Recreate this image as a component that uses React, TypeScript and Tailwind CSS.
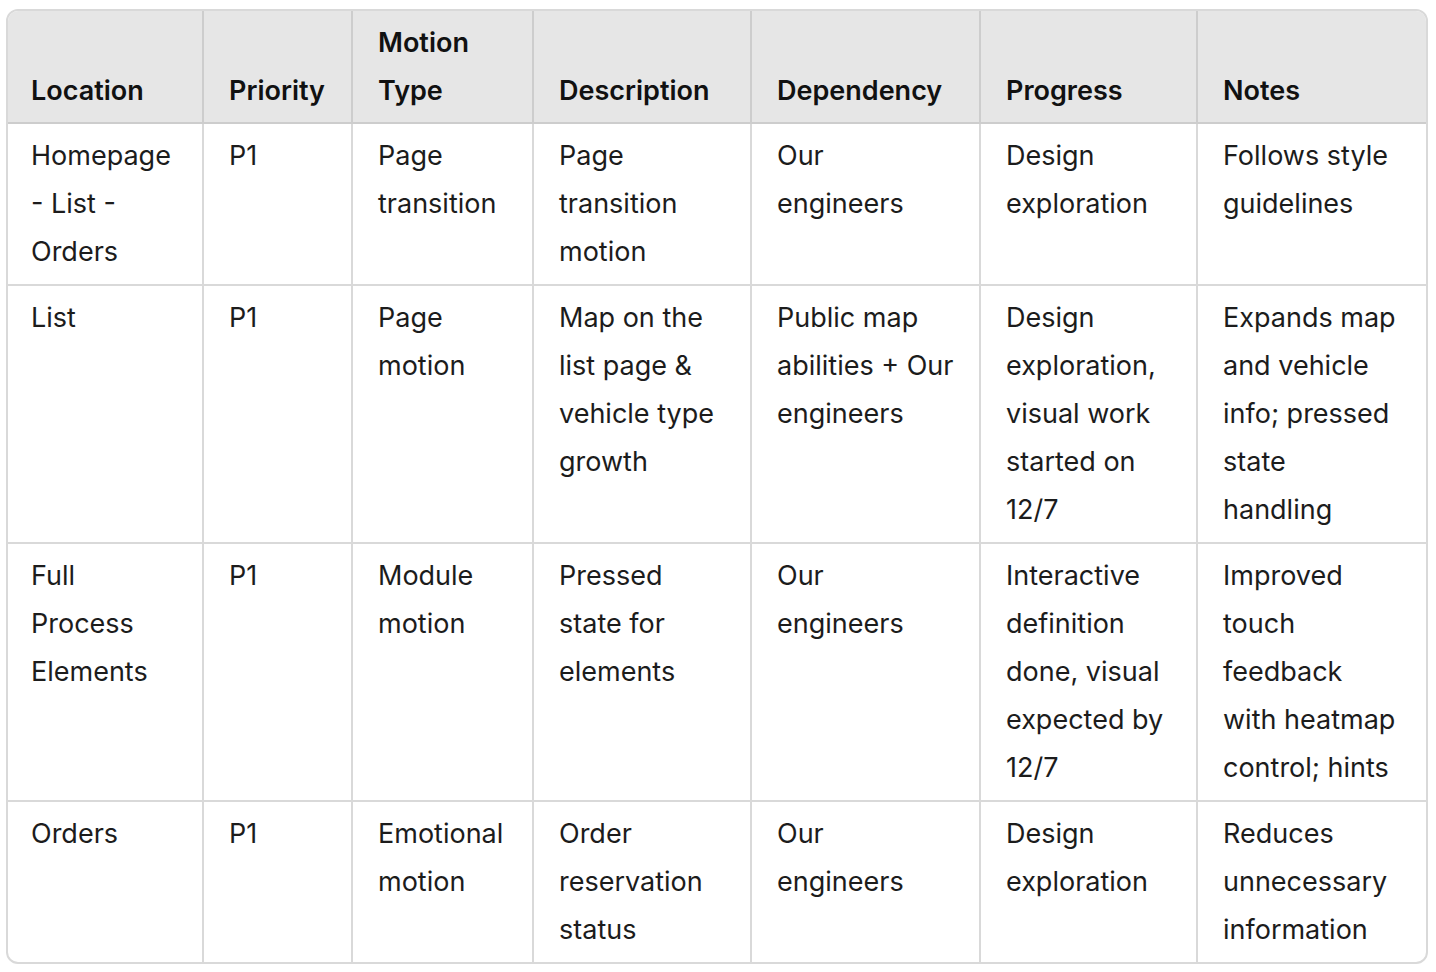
import React from "react";

const cols = [194, 149, 181, 218, 229, 217, 230];
const headers = ["Location", "Priority", "Motion Type", "Description", "Dependency", "Progress", "Notes"];
const rows: string[][] = [
  ["Homepage - List - Orders", "P1", "Page transition", "Page transition motion", "Our engineers", "Design exploration", "Follows style guidelines"],
  ["List", "P1", "Page motion", "Map on the list page & vehicle type growth", "Public map abilities + Our engineers", "Design exploration, visual work started on 12/7", "Expands map and vehicle info; pressed state handling"],
  ["Full Process Elements", "P1", "Module motion", "Pressed state for elements", "Our engineers", "Interactive definition done, visual expected by 12/7", "Improved touch feedback with heatmap control; hints"],
  ["Orders", "P1", "Emotional motion", "Order reservation status", "Our engineers", "Design exploration", "Reduces unnecessary information"],
];

const padCls = (i: number) =>
  i === 0 ? "pl-[23px] pr-[25px]" : i === 6 ? "pl-[25px] pr-[27px]" : "pl-[25px] pr-[25px]";

export default function App() {
  return (
    <div className="bg-white w-[1436px] h-[972px] pt-[9px] pl-[6px]" style={{ fontFamily: "Inter, 'Noto Sans', sans-serif" }}>
      <div className="w-[1422px] border-2 border-[#d9d9d9] rounded-[12px] overflow-hidden">
        <table className="table-fixed w-full border-separate border-spacing-0 text-[27px] leading-[48px]">
          <colgroup>
            {cols.map((w, i) => (
              <col key={i} style={{ width: w }} />
            ))}
          </colgroup>
          <thead>
            <tr className="bg-[#e6e6e6]">
              {headers.map((h, i) => (
                <th
                  key={i}
                  className={`text-left align-bottom font-semibold text-[#111111] ${padCls(i)} pt-[8px] pb-[7px] border-b-2 border-[#cdcdcd] ${i > 0 ? "border-l-2" : ""}`}
                >
                  {h}
                </th>
              ))}
            </tr>
          </thead>
          <tbody>
            {rows.map((r, ri) => (
              <tr key={ri}>
                {r.map((c, ci) => (
                  <td
                    key={ci}
                    className={`align-top text-[#1c1c1c] ${padCls(ci)} pt-[8px] pb-[8px] border-[#d9d9d9] ${ci > 0 ? "border-l-2" : ""} ${ri > 0 ? "border-t-2" : ""}`}
                  >
                    {c}
                  </td>
                ))}
              </tr>
            ))}
          </tbody>
        </table>
      </div>
    </div>
  );
}
